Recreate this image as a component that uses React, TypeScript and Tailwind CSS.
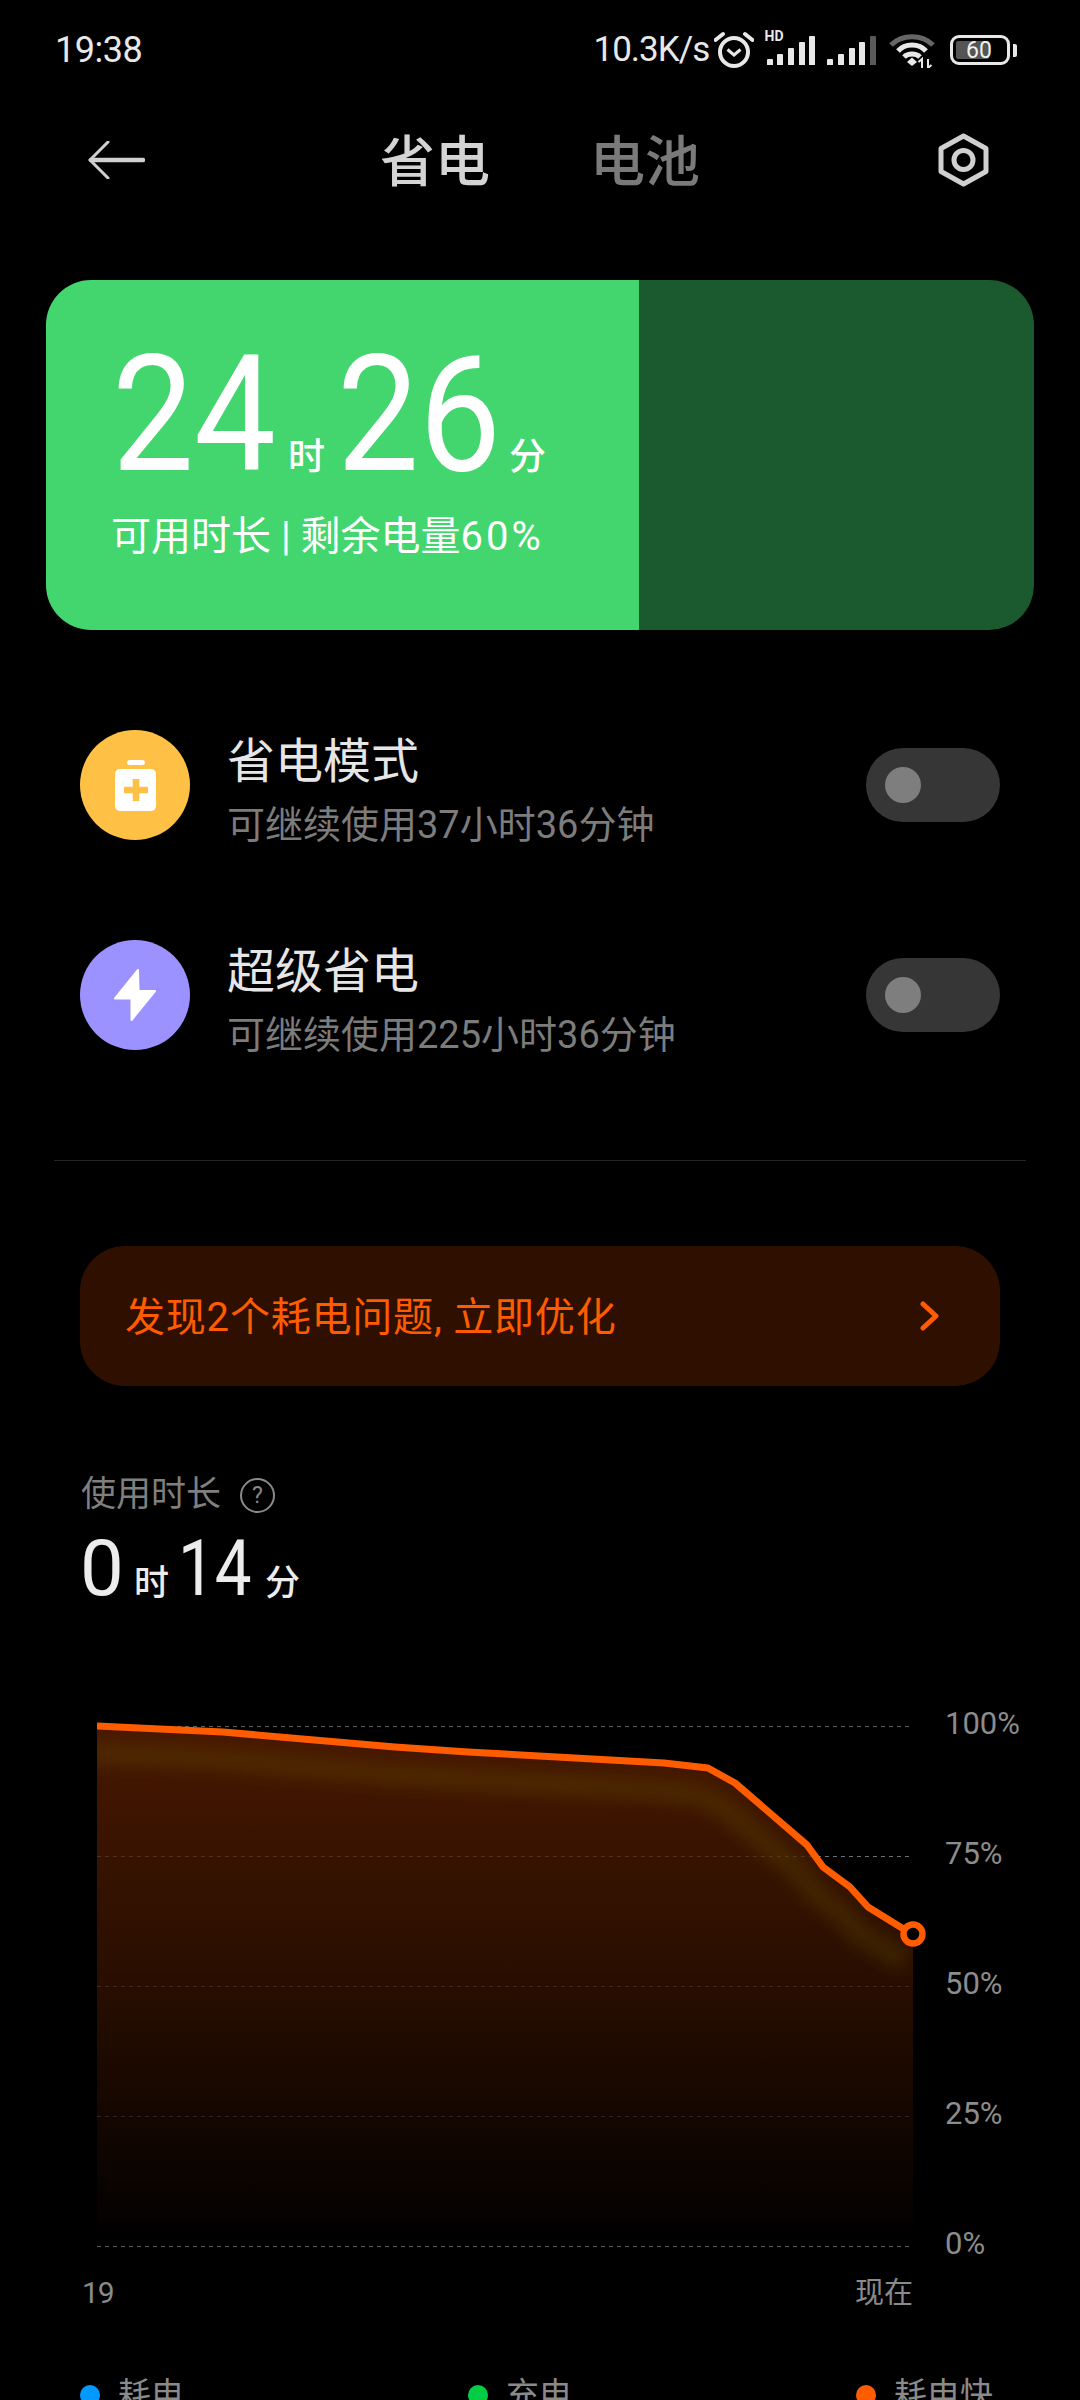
import React from "react";

const linePts = "97,1726 223,1732 395,1747 468,1752 664,1763 708,1768 735,1783 807,1845 823,1867 850,1887 868,1907 902,1928 913,1934";
const areaPts = `${linePts} 913,2246 97,2246`;

function Bars({ dim }: { dim?: boolean }) {
  const hs = [6, 11, 17, 23, 29];
  return (
    <div className="flex items-end gap-[4.7px] h-[29px]">
      {hs.map((h, i) => (
        <div
          key={i}
          className={dim && i === 4 ? "w-[6px] bg-[#5a5a5a] rounded-t-[1px]" : "w-[6px] bg-[#e8e8e8] rounded-t-[1px]"}
          style={{ height: h }}
        />
      ))}
    </div>
  );
}

function Toggle() {
  return (
    <div className="w-[134px] h-[74px] rounded-[37px] bg-[#363636] flex items-center pl-[19px]">
      <div className="w-[36px] h-[36px] rounded-full bg-[#7e7e7e]" />
    </div>
  );
}

function ModeRow({ title, sub, color, icon, className }: { title: string; sub: string; color: string; icon: React.ReactNode; className: string }) {
  return (
    <div className={"flex items-center pl-[80px] pr-[80px] h-[110px] " + className}>
      <div className={"w-[110px] h-[110px] rounded-full flex items-center justify-center shrink-0 " + color}>{icon}</div>
      <div className="ml-[37px] flex flex-col self-start pt-[4px]">
        <div className="text-[48px] leading-[56px] text-[#e6e6e6]">{title}</div>
        <div className="text-[38px] leading-[44px] mt-[13px] text-[#7c7c7c]">{sub}</div>
      </div>
      <div className="ml-auto">
        <Toggle />
      </div>
    </div>
  );
}

export default function App() {
  return (
    <div className="w-[1080px] h-[2400px] overflow-hidden bg-black font-['Roboto','Noto_Sans_CJK_SC',sans-serif]">
      {/* status bar */}
      <div className="flex items-center h-[40px] mt-[30px] pl-[55px] pr-[63px] text-[#e8e8e8]">
        <div className="text-[36px] leading-[40px] tracking-[-0.5px]">19:38</div>
        <div className="ml-auto text-[35px] leading-[40px] tracking-[-1px] w-[120px]">10.3K/s</div>
        <svg viewBox="0 0 40 38" className="w-[40px] h-[38px] shrink-0" fill="none" stroke="#e8e8e8">
          <circle cx="20" cy="21" r="14" strokeWidth="4" />
          <path d="M13.5 18.5 L20 24 L26.5 18.5" strokeWidth="3" />
          <path d="M1.5 9 L9 3 M31 3 L38.5 9" strokeWidth="4" strokeLinecap="round" />
        </svg>
        <div className="relative ml-[13px]">
          <div className="absolute left-[-2px] top-[-7px] text-[14px] leading-[14px] font-bold text-[#e8e8e8]">HD</div>
          <Bars />
        </div>
        <div className="ml-[12px]">
          <Bars dim />
        </div>
        <svg viewBox="0 0 46 36" className="w-[46px] h-[36px] ml-[13px] shrink-0" fill="none">
          <path d="M2 13 C13 2 33 2 44 13" stroke="#666666" strokeWidth="5" />
          <path d="M9 19 C16 11 30 11 37 19" stroke="#e8e8e8" strokeWidth="5" />
          <path d="M15 25 C19 21 27 21 31 25" stroke="#e8e8e8" strokeWidth="5" />
          <path d="M18 30 L23 25.5 L28 30 L23 34 Z" fill="#e8e8e8" />
          <path d="M33 36 V27 L29.5 30 M39 27 V36 L42.5 33" stroke="#e8e8e8" strokeWidth="2" />
        </svg>
        <div className="relative w-[60px] h-[30px] ml-[15px] border-[3.5px] border-[#e8e8e8] rounded-[9px] shrink-0">
          <div className="absolute left-[3px] top-[3px] bottom-[3px] w-[33px] bg-[#555555] rounded-[2px]" />
          <div className="absolute left-[13px] top-0 bottom-0 flex items-center text-[23px] leading-[23px] text-[#f0f0f0]">60</div>
        </div>
        <div className="w-[4px] h-[13px] bg-[#e8e8e8] rounded-r-[2px] ml-[3px]" />
      </div>

      {/* header */}
      <div className="flex items-center h-[56px] mt-[62px] pl-[88px] pr-[91px]">
        <svg viewBox="0 0 57 38" className="w-[57px] h-[38px] shrink-0" fill="none" stroke="#d0d0d0" strokeLinecap="round">
          <path d="M3 19 H55" strokeWidth="4.5" />
          <path d="M20 1 L2 19 L20 37" strokeWidth="3" />
        </svg>
        <div className="ml-[235px] text-[55px] leading-[56px] pt-[4px] font-medium text-[#d4d4d4] w-[110px]">省电</div>
        <div className="ml-[100px] text-[55px] leading-[56px] pt-[4px] font-medium text-[#7a7a7a] w-[110px]">电池</div>
        <svg viewBox="0 0 51 54" className="ml-auto w-[51px] h-[54px]" fill="none" stroke="#d0d0d0" strokeWidth="5" strokeLinejoin="round">
          <path d="M25.5 3 L48 15.5 V38.5 L25.5 51 L3 38.5 V15.5 Z" />
          <circle cx="25.5" cy="27" r="9.5" />
        </svg>
      </div>

      {/* battery card */}
      <div className="flex ml-[46px] w-[988px] h-[350px] mt-[92px] rounded-[45px] overflow-hidden">
        <div className="w-[593px] bg-[#43d66e] pl-[66px] pt-[50px] text-white">
          <div className="flex items-baseline h-[170px]">
            <span className="inline-block text-[162px] leading-[170px] w-[176px] origin-left scale-x-[0.9]">24</span>
            <span className="text-[37px] leading-[40px] font-medium w-[49px]">时</span>
            <span className="inline-block text-[162px] leading-[170px] w-[172px] origin-left scale-x-[0.9]">26</span>
            <span className="text-[37px] leading-[40px] font-medium">分</span>
          </div>
          <div className="text-[40px] leading-[46px] mt-[14px] -ml-[1px]">
            可用时长 | 剩余电量<span className="tracking-[3px]">60%</span>
          </div>
        </div>
        <div className="flex-1 bg-[#1b5a2e]" />
      </div>

      {/* modes */}
      <ModeRow
        className="mt-[100px]"
        title="省电模式"
        sub="可继续使用37小时36分钟"
        color="bg-[#ffc145]"
        icon={
          <svg viewBox="0 0 41 51" className="w-[41px] h-[51px]">
            <rect x="12" y="0" width="18" height="5" rx="2.5" fill="#fff" />
            <rect x="0" y="9" width="41" height="42" rx="5" fill="#fff" />
            <path d="M21 19 V41 M9 30 H33" stroke="#ffc145" strokeWidth="6.5" strokeLinecap="butt" />
          </svg>
        }
      />
      <ModeRow
        className="mt-[100px]"
        title="超级省电"
        sub="可继续使用225小时36分钟"
        color="bg-[#9c92ff]"
        icon={
          <svg viewBox="0 0 42 52" className="w-[42px] h-[52px]">
            <path d="M24 1 L1 29.5 H17.5 V51 L41 22 H24.5 Z" fill="#fff" stroke="#fff" strokeWidth="2" strokeLinejoin="round" />
          </svg>
        }
      />

      {/* divider */}
      <div className="ml-[54px] w-[972px] h-[1px] bg-[#242424] mt-[110px]" />

      {/* banner */}
      <div className="flex items-center ml-[80px] w-[920px] h-[140px] mt-[85px] rounded-[45px] bg-[#2f1000] pl-[45px] pr-[60px]">
        <div className="text-[40px] leading-[46px] pt-[3px] tracking-[0.8px] text-[#ff5c00]">发现2个耗电问题, 立即优化</div>
        <svg viewBox="0 0 20 30" className="ml-auto w-[20px] h-[30px]" fill="none" stroke="#ff5c00" strokeWidth="5" strokeLinecap="round" strokeLinejoin="round">
          <path d="M3 3 L16 15 L3 27" />
        </svg>
      </div>

      {/* usage */}
      <div className="flex items-center ml-[81px] mt-[90px] h-[38px]">
        <div className="text-[35px] leading-[38px] text-[#7f7f7f]">使用时长</div>
        <div className="ml-[19px] w-[35px] h-[35px] rounded-full border-[2px] border-[#8a8a8a] flex items-center justify-center text-[23px] leading-[23px] text-[#8a8a8a]">?</div>
      </div>
      <div className="flex items-baseline ml-[80px] mt-[15px] h-[80px] text-[#ececec]">
        <span className="text-[78px] leading-[80px] w-[54px]">0</span>
        <span className="text-[35px] leading-[40px] font-medium w-[44px]">时</span>
        <span className="inline-block text-[78px] leading-[80px] w-[87px] origin-left scale-x-[0.84]">14</span>
        <span className="text-[35px] leading-[40px] font-medium">分</span>
      </div>

      {/* chart */}
      <div className="flex pl-[97px] mt-[95px]">
        <svg viewBox="97 1716 830 534" className="w-[830px] h-[534px] mt-[12px] shrink-0">
          <defs>
            <linearGradient id="area" gradientUnits="userSpaceOnUse" x1="0" y1="1726" x2="0" y2="2246">
              <stop offset="0" stopColor="#481800" />
              <stop offset="0.5" stopColor="#280e00" />
              <stop offset="1" stopColor="#000000" />
            </linearGradient>
            <clipPath id="areaClip">
              <polygon points={areaPts} />
            </clipPath>
            <filter id="soft" x="-10%" y="-20%" width="120%" height="140%">
              <feGaussianBlur stdDeviation="8" />
            </filter>
          </defs>
          {[1726, 1856, 1986, 2116, 2246].map((y) => (
            <line key={y} x1="97" x2="913" y1={y + 0.5} y2={y + 0.5} stroke="#5c5c5c" strokeWidth="1" strokeDasharray="4 4" />
          ))}
          <polygon points={areaPts} fill="url(#area)" />
          {[1856, 1986, 2116].map((y) => (
            <line key={y} x1="97" x2="913" y1={y + 0.5} y2={y + 0.5} stroke="#ffffff" strokeOpacity="0.12" strokeWidth="1" strokeDasharray="4 4" />
          ))}
          <g clipPath="url(#areaClip)">
            <polyline points={linePts} transform="translate(-8 27)" fill="none" stroke="#6a5a10" strokeOpacity="0.25" strokeWidth="22" filter="url(#soft)" />
          </g>
          <polyline points={linePts} fill="none" stroke="#ff5c00" strokeWidth="7" strokeLinejoin="round" />
          <circle cx="913" cy="1934" r="9.5" fill="#000" stroke="#ff5c00" strokeWidth="6.5" />
        </svg>
        <div className="flex flex-col gap-[90px] ml-[18px] -mb-[14px] text-[31px] leading-[40px] text-[#8c8c8c]">
          <div>100%</div>
          <div>75%</div>
          <div>50%</div>
          <div>25%</div>
          <div>0%</div>
        </div>
      </div>

      {/* x labels */}
      <div className="flex justify-between items-center ml-[82px] w-[831px] mt-[23px] h-[40px] text-[#8a8a8a]">
        <span className="text-[30px] leading-[40px] tracking-[-1px]">19</span>
        <span className="text-[29px] leading-[40px]">现在</span>
      </div>

      {/* legend */}
      <div className="flex pl-[80px] mt-[60px] text-[33px] leading-[44px] text-[#8a8a8a]">
        <div className="flex items-center w-[388px]">
          <div className="w-[20px] h-[20px] rounded-full bg-[#0099ff]" />
          <span className="ml-[18px]">耗电</span>
        </div>
        <div className="flex items-center w-[388px]">
          <div className="w-[20px] h-[20px] rounded-full bg-[#00cc44]" />
          <span className="ml-[18px]">充电</span>
        </div>
        <div className="flex items-center">
          <div className="w-[20px] h-[20px] rounded-full bg-[#ff5c00]" />
          <span className="ml-[18px]">耗电快</span>
        </div>
      </div>
    </div>
  );
}
